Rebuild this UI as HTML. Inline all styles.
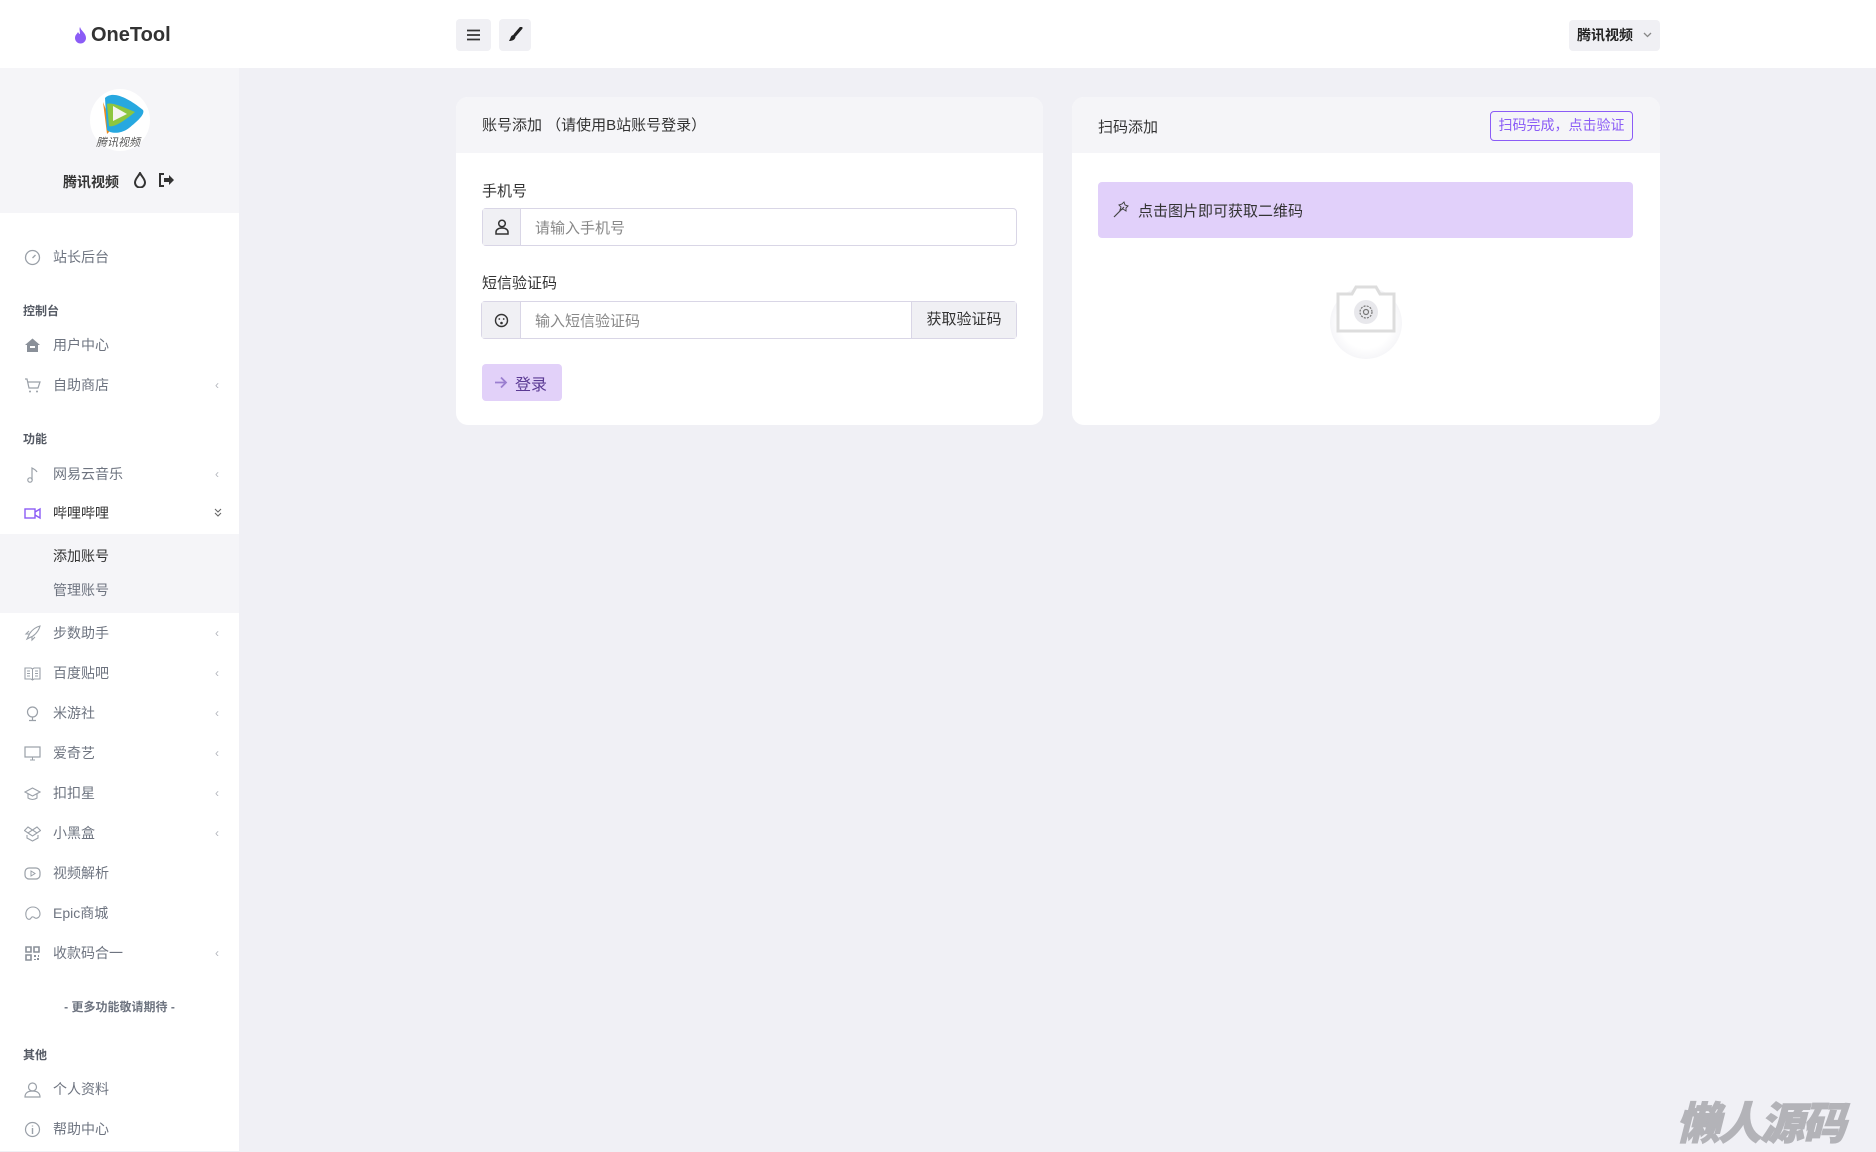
<!DOCTYPE html>
<html><head><meta charset="utf-8"><style>
*{box-sizing:border-box;margin:0;padding:0}
body{width:1876px;height:1151px;overflow:hidden;background:#f0f0f5;font-family:"Liberation Sans","Noto Sans CJK SC",sans-serif;position:relative;color:#333}
.abs{position:absolute}
.hdr{left:0;top:0;width:1876px;height:68px;background:#fff}
.side{left:0;top:68px;width:239px;height:1083px;background:#fff}
.prof{left:0;top:68px;width:239px;height:145px;background:#f5f5f8}
.mi{position:absolute;left:0;width:239px;height:20px;font-size:14px;color:#6e7480;line-height:20px}
.mi .ic{position:absolute;left:24px;top:2px;width:17px;height:17px}
.mi .tx{position:absolute;left:53px;top:0}
.mi .ar{position:absolute;left:215px;top:0;color:#b5b8bf;font-size:12px}
.sec{position:absolute;left:23px;font-size:12px;font-weight:bold;color:#555a64}
.card{background:#fff;border-radius:12px;overflow:hidden}
.ch{background:#f5f5f8;height:56px}
svg{display:block}
</style></head><body>
<div class="abs hdr"></div>
<svg class="abs" style="left:74px;top:26px" width="13" height="18" viewBox="0 0 13 18"><path d="M6 1C7 5 12 7 12 12a5.5 5.5 0 0 1-11 0C1 9 3 8 4 6c1 2 2 2 2 2C6 5 5 3 6 1z" fill="#8b5cf6"/></svg>
<div class="abs" style="left:91px;top:24px;font-size:20px;color:#333;font-weight:bold">OneTool</div>
<div class="abs" style="left:456px;top:19px;width:35px;height:32px;background:#f0f0f4;border-radius:4px"></div>
<svg class="abs" style="left:467px;top:29px" width="13" height="12"><path d="M0 1.5h13M0 6h13M0 10.5h13" stroke="#333" stroke-width="1.8"/></svg>
<div class="abs" style="left:499px;top:19px;width:32px;height:32px;background:#f0f0f4;border-radius:4px"></div>
<svg class="abs" style="left:508px;top:27px" width="15" height="15"><path d="M13 1L7 8" stroke="#222" stroke-width="3" stroke-linecap="round"/><path d="M6 8c-2 0-3 1-3.5 3L1 14c3 0 6-1 6.5-4z" fill="#222"/></svg>
<div class="abs" style="left:1569px;top:20px;width:91px;height:31px;background:#f0f0f4;border-radius:4px;font-size:14px;font-weight:bold;color:#222;line-height:31px;padding-left:8px">腾讯视频</div>
<svg class="abs" style="left:1643px;top:32px" width="9" height="6"><path d="M1 1l3.5 3.5L8 1" fill="none" stroke="#888" stroke-width="1.3"/></svg>

<div class="abs side"></div>
<div class="abs prof"></div>
<div class="abs" style="left:90px;top:89px;width:60px;height:62px;border-radius:50%;background:#fff"></div>
<svg class="abs" style="left:93px;top:90px" width="56" height="46" viewBox="0 0 56 46"><path d="M10 12L14 44L20 38Z" fill="#f08a1c"/><path d="M12 8C18 2 30 4 50 20C52 24 46 30 36 38C28 44 18 44 14 40Z" fill="#27a8e0"/><path d="M14 14C18 12 28 16 42 22C30 32 20 38 16 36Z" fill="#8dc63f"/><path d="M20 16L34 24L20 31Z" fill="#f4f4f0"/></svg>
<div class="abs" style="left:96px;top:134px;font-size:11px;color:#555;font-style:italic">腾讯视频</div>
<div class="abs" style="left:63px;top:172px;font-size:14px;font-weight:bold;color:#333">腾讯视频</div>
<svg class="abs" style="left:134px;top:172px" width="12" height="16" viewBox="0 0 12 16"><path d="M6 1C8 5 11 7 11 10.5a5 5 0 0 1-10 0C1 7 4 5 6 1z" fill="none" stroke="#333" stroke-width="2"/></svg>
<svg class="abs" style="left:158px;top:173px" width="17" height="14" viewBox="0 0 17 14"><path d="M6 1H2v12h4" fill="none" stroke="#333" stroke-width="2"/><path d="M6 5h5V2l5 5-5 5V9H6z" fill="#333"/></svg>

<div class="mi" style="top:247px"><svg class="ic" viewBox="0 0 17 17"><circle cx="8.5" cy="8.5" r="7" fill="none" stroke="#9aa0a8" stroke-width="1.3"/><path d="M8.5 9l3-3" stroke="#9aa0a8" stroke-width="1.3"/></svg><span class="tx">站长后台</span></div>
<div class="sec" style="top:302px">控制台</div>
<div class="mi" style="top:335px"><svg class="ic" viewBox="0 0 17 17"><path d="M1 8L8.5 1.5 16 8h-2v7H3V8z" fill="#8a9099"/><rect x="6" y="9" width="5" height="2" fill="#fff"/></svg><span class="tx">用户中心</span></div>
<div class="mi" style="top:375px"><svg class="ic" viewBox="0 0 17 17"><path d="M1 2h2l2 9h9l2-6H4" fill="none" stroke="#9aa0a8" stroke-width="1.2"/><circle cx="6" cy="14.5" r="1" fill="#9aa0a8"/><circle cx="13" cy="14.5" r="1" fill="#9aa0a8"/></svg><span class="tx">自助商店</span><span class="ar">‹</span></div>
<div class="sec" style="top:430px">功能</div>
<div class="mi" style="top:464px"><svg class="ic" viewBox="0 0 17 17"><path d="M8 14V2c2 1 4 2 5 4" fill="none" stroke="#9aa0a8" stroke-width="1.2"/><circle cx="6" cy="14" r="2.2" fill="none" stroke="#9aa0a8" stroke-width="1.2"/></svg><span class="tx">网易云音乐</span><span class="ar">‹</span></div>
<div class="mi" style="top:503px;color:#333"><svg class="ic" viewBox="0 0 17 17"><rect x="1" y="4" width="10" height="9" fill="none" stroke="#8b5cf6" stroke-width="1.4"/><path d="M11 7l5-3v9l-5-3" fill="none" stroke="#8b5cf6" stroke-width="1.4"/></svg><span class="tx">哔哩哔哩</span><svg class="abs" style="left:214px;top:5px" width="8" height="10"><path d="M1 1l3 3 3-3M1 5l3 3 3-3" fill="none" stroke="#666" stroke-width="1.1"/></svg></div>
<div class="abs" style="left:0;top:534px;width:239px;height:79px;background:#f5f5f8"></div>
<div class="mi" style="top:546px;color:#333"><span class="tx">添加账号</span></div>
<div class="mi" style="top:580px"><span class="tx">管理账号</span></div>
<div class="mi" style="top:623px"><svg class="ic" viewBox="0 0 17 17"><path d="M3 14l3-6c3-4 6-6 10-7-1 4-3 7-7 10zM5 9H2l3-3M8 12v3l3-3" fill="none" stroke="#9aa0a8" stroke-width="1.1"/></svg><span class="tx">步数助手</span><span class="ar">‹</span></div>
<div class="mi" style="top:663px"><svg class="ic" viewBox="0 0 17 17"><path d="M1 3h6l1.5 1L10 3h6v11h-6l-1.5 1L7 14H1z" fill="none" stroke="#9aa0a8" stroke-width="1.1"/><path d="M8.5 4v11M3 6h3M3 8.5h3M3 11h3M11 6h3M11 8.5h3M11 11h3" stroke="#9aa0a8"/></svg><span class="tx">百度贴吧</span><span class="ar">‹</span></div>
<div class="mi" style="top:703px"><svg class="ic" viewBox="0 0 17 17"><circle cx="8.5" cy="7" r="5" fill="none" stroke="#9aa0a8" stroke-width="1.2"/><path d="M8.5 12v3M5 15.5h7" stroke="#9aa0a8" stroke-width="1.2"/></svg><span class="tx">米游社</span><span class="ar">‹</span></div>
<div class="mi" style="top:743px"><svg class="ic" viewBox="0 0 17 17"><rect x="1" y="2" width="15" height="10" fill="none" stroke="#9aa0a8" stroke-width="1.2"/><path d="M6 15h5M8.5 12v3" stroke="#9aa0a8"/></svg><span class="tx">爱奇艺</span><span class="ar">‹</span></div>
<div class="mi" style="top:783px"><svg class="ic" viewBox="0 0 17 17"><path d="M1 7l7.5-4L16 7l-7.5 4z M4 9v4c3 2 6 2 9 0V9" fill="none" stroke="#9aa0a8" stroke-width="1.1"/></svg><span class="tx">扣扣星</span><span class="ar">‹</span></div>
<div class="mi" style="top:823px"><svg class="ic" viewBox="0 0 17 17"><path d="M4 2l4.5 3L4 8 0.5 5.5zM13 2l-4.5 3L13 8l3.5-2.5zM4 8l4.5 3L13 8M3 10v3l5.5 3 5.5-3v-3" fill="none" stroke="#9aa0a8" stroke-width="1.1"/></svg><span class="tx">小黑盒</span><span class="ar">‹</span></div>
<div class="mi" style="top:863px"><svg class="ic" viewBox="0 0 17 17"><rect x="1" y="3" width="15" height="11" rx="4" fill="none" stroke="#9aa0a8" stroke-width="1.2"/><path d="M7 6v5l4-2.5z" fill="none" stroke="#9aa0a8"/></svg><span class="tx">视频解析</span></div>
<div class="mi" style="top:903px"><svg class="ic" viewBox="0 0 17 17"><path d="M9 2C4 2 1 6 2 11c1 4 4 4 5 2s3-1 4 0c2 1 5-1 5-4 0-4-3-7-7-7z" fill="none" stroke="#9aa0a8" stroke-width="1.1"/></svg><span class="tx">Epic商城</span></div>
<div class="mi" style="top:943px"><svg class="ic" viewBox="0 0 17 17"><path d="M2 2h5v5H2zM10 2h5v5h-5zM2 10h5v5H2z" fill="none" stroke="#8a9099" stroke-width="1.6"/><path d="M10 10h2v2h-2zM13 13h2v2h-2zM10 14h2v1h-2zM14 10h1v2h-1z" fill="#8a9099"/></svg><span class="tx">收款码合一</span><span class="ar">‹</span></div>
<div class="abs" style="left:0;top:998px;width:239px;text-align:center;font-size:12px;font-weight:bold;color:#6e7480">- 更多功能敬请期待 -</div>
<div class="sec" style="top:1046px">其他</div>
<div class="mi" style="top:1079px"><svg class="ic" viewBox="0 0 17 17"><circle cx="8.5" cy="6" r="4" fill="none" stroke="#9aa0a8" stroke-width="1.2"/><path d="M1 16c0-4 3-6 7.5-6s7.5 2 7.5 6z" fill="none" stroke="#9aa0a8" stroke-width="1.2"/></svg><span class="tx">个人资料</span></div>
<div class="mi" style="top:1119px"><svg class="ic" viewBox="0 0 17 17"><circle cx="8.5" cy="8.5" r="7" fill="none" stroke="#9aa0a8" stroke-width="1.2"/><path d="M8.5 7v6M8.5 4.5v1" stroke="#9aa0a8" stroke-width="1.4"/></svg><span class="tx">帮助中心</span></div>

<div class="abs card" style="left:456px;top:97px;width:587px;height:328px">
<div class="ch"></div>
<div class="abs" style="left:26px;top:17px;font-size:15px;color:#333">账号添加 （请使用B站账号登录）</div>
<div class="abs" style="left:26px;top:83px;font-size:15px;color:#333">手机号</div>
<div class="abs" style="left:26px;top:111px;width:535px;height:38px;border:1px solid #d9d6e6;border-radius:4px;background:#fff">
 <div class="abs" style="left:0;top:0;width:38px;height:36px;background:#f0f0f4;border-right:1px solid #d9d6e6"></div>
 <svg class="abs" style="left:12px;top:10px" width="14" height="16" viewBox="0 0 14 16"><circle cx="7" cy="4.5" r="3.3" fill="none" stroke="#333" stroke-width="1.5"/><path d="M1 15v-2c0-2 2-4 6-4s6 2 6 4v2z" fill="none" stroke="#333" stroke-width="1.5"/></svg>
 <div class="abs" style="left:52px;top:8px;font-size:15px;color:#888">请输入手机号</div>
</div>
<div class="abs" style="left:26px;top:175px;font-size:15px;color:#333">短信验证码</div>
<div class="abs" style="left:25px;top:204px;width:536px;height:38px;border:1px solid #d9d6e6;border-radius:4px;background:#fff">
 <div class="abs" style="left:0;top:0;width:39px;height:36px;background:#f0f0f4;border-right:1px solid #d9d6e6"></div>
 <svg class="abs" style="left:12px;top:11px" width="15" height="15" viewBox="0 0 15 15"><circle cx="7.5" cy="7.5" r="6" fill="none" stroke="#333" stroke-width="1.4"/><circle cx="5.3" cy="6" r="0.9" fill="#333"/><circle cx="9.7" cy="6" r="0.9" fill="#333"/><circle cx="7.5" cy="10" r="1.3" fill="#333"/></svg>
 <div class="abs" style="left:53px;top:8px;font-size:15px;color:#888">输入短信验证码</div>
 <div class="abs" style="left:429px;top:0;width:105px;height:36px;background:#f0f0f4;border-left:1px solid #d9d6e6;font-size:15px;color:#333;text-align:center;line-height:36px">获取验证码</div>
</div>
<div class="abs" style="left:26px;top:267px;width:80px;height:37px;background:#e2d1f9;border-radius:4px"></div>
<svg class="abs" style="left:38px;top:279px" width="14" height="13"><path d="M1 6.5h11M7 1.5l5 5-5 5" fill="none" stroke="#9b7fd0" stroke-width="1.8"/></svg>
<div class="abs" style="left:59px;top:274px;font-size:16px;color:#5b3a94">登录</div>
</div>

<div class="abs card" style="left:1072px;top:97px;width:588px;height:328px">
<div class="ch"></div>
<div class="abs" style="left:26px;top:19px;font-size:15px;color:#333">扫码添加</div>
<div class="abs" style="left:418px;top:14px;width:143px;height:30px;border:1.5px solid #8b5cf6;border-radius:4px;font-size:14px;color:#8b5cf6;text-align:center;line-height:27px">扫码完成，点击验证</div>
<div class="abs" style="left:26px;top:85px;width:535px;height:56px;background:#e1d0fa;border-radius:4px"></div>
<svg class="abs" style="left:41px;top:104px" width="16" height="17" viewBox="0 0 16 17"><path d="M1 16l10-10" stroke="#444" stroke-width="1.2"/><path d="M11 1l1 3 3 1-2 2 0 3-3-2-3 1 1-3-2-2 3-1z" fill="none" stroke="#444" stroke-width="1"/></svg>
<div class="abs" style="left:66px;top:103px;font-size:15px;color:#333">点击图片即可获取二维码</div>
<div class="abs" style="left:258px;top:190px;width:72px;height:72px;border-radius:50%;background:radial-gradient(#fff 50%,rgba(240,240,244,0.6) 70%,rgba(255,255,255,0) 100%)"></div>
<svg class="abs" style="left:264px;top:187px" width="60" height="50" viewBox="0 0 60 50"><path d="M2 10h14l4-7h20l4 7h14v37H2z" fill="#fff" stroke="#ddd" stroke-width="3"/><circle cx="30" cy="28" r="12" fill="#e8e8ec"/><circle cx="30" cy="28" r="6" fill="none" stroke="#777" stroke-width="1.2" stroke-dasharray="2 1.2"/><circle cx="30" cy="28" r="2.5" fill="none" stroke="#777" stroke-width="1.2"/></svg>
</div>

<div class="abs" style="left:1676px;top:1088px;font-size:44px;font-weight:900;font-style:italic;color:#b3b3b8;letter-spacing:-2px;font-family:'Noto Sans CJK SC',sans-serif;-webkit-text-stroke:1px #b3b3b8">懒人源码</div>
</body></html>
